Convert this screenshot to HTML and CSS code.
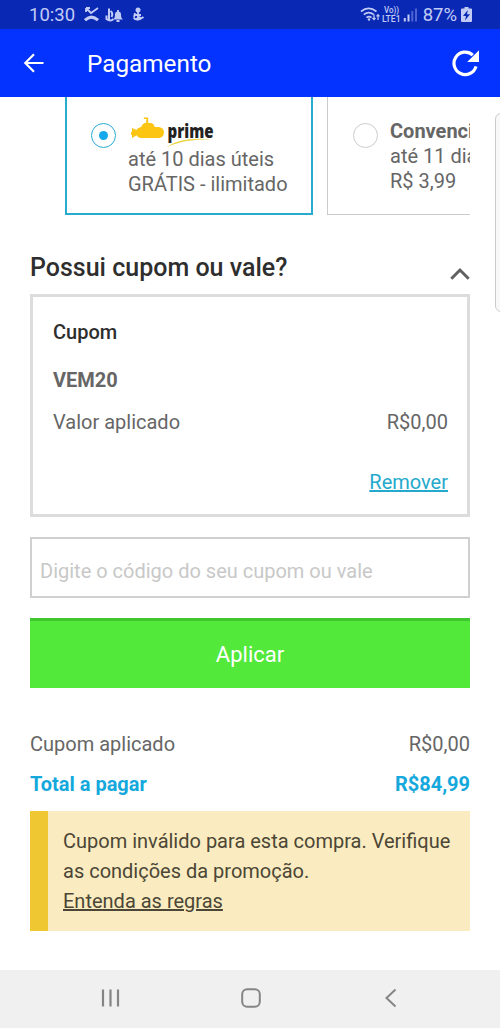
FILE: index.html
```html
<!DOCTYPE html>
<html lang="pt-BR">
<head>
<meta charset="utf-8">
<title>Pagamento</title>
<link rel="stylesheet" href="styles.css">
</head>
<body>
<div class="screen">
  <header class="status">
    <span class="time">10:30</span>
    <svg class="status-left" width="64" height="16" viewBox="0 0 64 16" fill="none" stroke="#c2cbf5" stroke-width="1.8">
      <path d="M2 1v4M2 1h4M2 1l5 5 7-5"/>
      <path d="M1 13.2Q7.500 7 14 13.200" stroke-width="3"/>
      <path d="M25 1.500V14M22.500 8.500v3.500q4 3 7 0M26.500 4q3 2 1 6" stroke-width="2"/>
      <path d="M29 12.500q2-1 2-5 0-3 3-3t3 3q0 4 2 5z" fill="#c2cbf5" stroke="none"/>
      <path d="M32.500 14h3M34 3v2" />
      <circle cx="54" cy="3" r="2.500" fill="#c2cbf5" stroke="none"/>
      <path d="M50 8h7M54 4v9M49.500 10.500q3 4.500 10-.5M51 6l-1 4"/>
      <path d="M51 12q3 3 7-1l-3-2z" fill="#c2cbf5" stroke="none"/>
    </svg>
    <svg class="status-right" width="60" height="18" viewBox="0 0 60 18" fill="none" stroke="#c2cbf5" stroke-width="1.700">
      <path d="M1 5.500Q8.500-.8 16.500 5.500M3.800 8.700Q8.700 4.500 13.800 8.700M6.500 11.700Q9 9.600 11.500 11.700"/>
      <circle cx="9" cy="13.500" r="1.200" fill="#c2cbf5" stroke="none"/>
      <path d="M14 8.500v5M12.500 12l1.500 1.700 1.500-1.700M18 14V8.500M16.500 10.300L18 8.600l1.500 1.700" stroke-width="1.200"/>
      <text x="24" y="7.300" textLength="15" lengthAdjust="spacingAndGlyphs">Vo))</text>
      <text x="22" y="15.600" textLength="18.500" lengthAdjust="spacingAndGlyphs">LTE1</text>
      <path d="M44.800 12v3.500M48.500 8.500v7" stroke-width="2"/>
      <path d="M52.300 5v10.500M56 2.500v13" stroke="#4d63d2" stroke-width="2"/>
    </svg>
    <span class="battery">87%</span>
    <svg class="battery-icon" width="11" height="15" viewBox="0 0 11 15"><path d="M3.500 0h4v1.500H10q1 0 1 1V14q0 1-1 1H1q-1 0-1-1V2.500q0-1 1-1h2.500z" fill="#c2cbf5"/><path d="M6.800 3L2 9h3l-1 4.500L9 7.300H6z" fill="#0929b5"/></svg>
  </header>
  <nav class="appbar">
    <svg class="arrow" width="22" height="20" viewBox="0 0 22 20" fill="none" stroke="#fff" stroke-width="2.200"><path d="M20.500 10H2.500M11 1.300L2.300 10l8.700 8.700"/></svg>
    <h1 class="title">Pagamento</h1>
    <svg class="reload" width="28" height="28" viewBox="0 0 28 28"><path d="M24 17.300A11.200 11.200 0 1 1 20.800 6.100" fill="none" stroke="#fff" stroke-width="3.200"/><path d="M27 1.200V13H15.200z" fill="#fff"/></svg>
  </nav>
  <main class="content">
    <section class="options">
      <div class="option selected">
        <span class="radio"></span>
        <div class="option-text">
          <svg class="brand" width="90" height="33" viewBox="0 0 90 33">
            <g fill="#fbc512"><rect x="8" y="12" width="28" height="11" rx="5.500"/><path d="M13 13q1-5 5-5l.5-4h-2.700V2.500h4.400V8h3.300q3 1 3.300 5zM4 13l7 3v3l-7 4v-3H3v-3h1z"/></g>
            <text x="39.500" y="22.500" textLength="46" lengthAdjust="spacingAndGlyphs">prime</text>
            <path d="M38.500 32.500Q51 21.500 85 24.200 54 24 38.500 32.500z" fill="#e9d33c"/>
          </svg>
          <p>até 10 dias úteis</p>
          <p>GRÁTIS - ilimitado</p>
        </div>
      </div>
      <div class="option">
        <span class="radio"></span>
        <div class="option-text">
          <p><b>Convencional</b></p>
          <p>até 11 dias úteis</p>
          <p>R$ 3,99</p>
        </div>
      </div>
    </section>
    <div class="heading">
      <h2>Possui cupom ou vale?</h2>
      <svg width="20" height="13" viewBox="0 0 20 13" fill="none" stroke="#606060" stroke-width="3"><path d="M1.300 11.700L10 3l8.700 8.700"/></svg>
    </div>
    <section class="coupon">
      <h3>Cupom</h3>
      <p class="code">VEM20</p>
      <div class="row"><span>Valor aplicado</span><span>R$0,00</span></div>
      <a class="remove">Remover</a>
    </section>
    <input class="field" type="text" placeholder="Digite o código do seu cupom ou vale">
    <button class="apply">Aplicar</button>
    <div class="row applied"><span>Cupom aplicado</span><span>R$0,00</span></div>
    <div class="row total"><span>Total a pagar</span><span>R$84,99</span></div>
    <aside class="notice">
      <p>Cupom inválido para esta compra. Verifique<br>as condições da promoção.</p>
      <a>Entenda as regras</a>
    </aside>
  </main>
  <footer class="navbar">
    <svg width="20" height="20" viewBox="0 0 20 20" stroke="#858585" stroke-width="2.200"><path d="M2 1.500v17M9.500 1.500v17M17 1.500v17"/></svg>
    <svg width="20" height="20" viewBox="0 0 20 20" fill="none" stroke="#858585" stroke-width="2"><rect x="1.200" y="1.200" width="17.600" height="17.600" rx="5"/></svg>
    <svg width="20" height="20" viewBox="0 0 20 20" fill="none" stroke="#858585" stroke-width="2"><path d="M14.500 1.500L5.500 10l9 8.500"/></svg>
  </footer>
  <div class="edge-panel"></div>
</div>
</body>
</html>
```
FILE: styles.css
```css
* { box-sizing: border-box; }
body, h1, h2, h3, p { margin: 0; }
body { font: 20px/25px Roboto, sans-serif; color: #666; background: #fff; }
.screen { position: relative; width: 500px; height: 1028px; overflow: hidden; display: flex; flex-direction: column; }

.status { height: 29px; flex: none; display: flex; align-items: flex-start; padding: 0 28px 0 29px; background: #0929b5; color: #c2cbf5; font-size: 18.5px; line-height: 31px; }
.status-left { margin: 7px 0 0 9px; }
.status-right { margin: 6px 0 0 auto; }
.status-right text { font: 500 9px Roboto, sans-serif; fill: #c2cbf5; stroke: none; }
.battery { margin-left: 3px; }
.battery-icon { margin: 7px 0 0 4px; }

.appbar { height: 68px; flex: none; display: flex; align-items: center; padding: 2px 20px 0 23px; background: #0433ff; color: #fff; }
.arrow { margin-top: -3px; }
.title { margin-left: 42px; font-size: 24.3px; font-weight: 400; line-height: 30px; }
.reload { margin: -3px 0 0 auto; }

.content { flex: 1; padding: 0 30px; }
.options { display: flex; gap: 14px; height: 118px; margin-left: 35px; overflow: hidden; }
.option { flex: none; display: flex; width: 248px; border: 1px solid #ccc; border-top: 0; padding: 22px 0 0 25px; }
.option.selected { border: 2px solid #29abd0; border-top: 0; padding: 18px 0 0 24px; }
.radio { flex: none; width: 25px; height: 25px; margin-top: 4px; border: 1.5px solid #ccc; border-radius: 50%; }
.selected .radio { display: grid; place-items: center; margin-top: 8px; border-color: #29abd0; }
.selected .radio::after { content: ""; width: 9px; height: 9px; border-radius: 50%; background: #15a8ea; }
.option-text { margin-left: 12px; white-space: nowrap; }
.brand { display: block; margin-bottom: -1px; }
.brand text { font: 800 19px "Open Sans", sans-serif; fill: #222; }

.heading { display: flex; justify-content: space-between; height: 79px; padding-top: 37px; }
h2 { font-size: 25px; font-weight: 500; line-height: 32px; color: #2e2e2e; }
.heading svg { margin-top: 15px; }

.coupon { height: 223px; border: 3px solid #dcdcdc; padding: 20px 19px 0 20px; }
h3 { font-size: 20px; font-weight: 500; line-height: 30px; color: #2e2e2e; }
.code { margin-top: 18px; font-weight: 700; line-height: 30px; }
.row { display: flex; justify-content: space-between; line-height: 30px; }
.coupon .row { margin-top: 12px; }
.remove { display: block; margin-top: 30px; text-align: right; line-height: 30px; color: #24a9cc; text-decoration: underline; }

.field { display: block; width: 100%; height: 61px; margin-top: 20px; padding: 6px 8px 0; border: 2px solid #d0d0d0; border-radius: 0; background: #fff; font: inherit; }
.field::placeholder { color: #c8c8c8; opacity: 1; }
.apply { display: block; width: 100%; height: 70px; margin-top: 20px; border: 0; border-top: 3px solid #40c62e; background: #53e93a; color: #fff; font: 22px/30px Roboto, sans-serif; padding: 0; }
.applied { margin-top: 41px; }
.total { margin-top: 10px; font-weight: 700; color: #15a8dc; }
.notice { height: 120px; margin-top: 12px; padding: 15px 0 0 15px; border-left: 18px solid #efc732; background: #faecc0; color: #4c4636; line-height: 30px; white-space: nowrap; }
.notice a { text-decoration: underline; }

.navbar { height: 58px; flex: none; display: flex; justify-content: space-between; padding: 18px 99px 0 101px; background: #f0f0f0; }
.edge-panel { position: absolute; left: 495px; top: 113px; width: 20px; height: 199px; border: 1px solid #ccc; border-radius: 6px; background: #f8f8f8; }
```
